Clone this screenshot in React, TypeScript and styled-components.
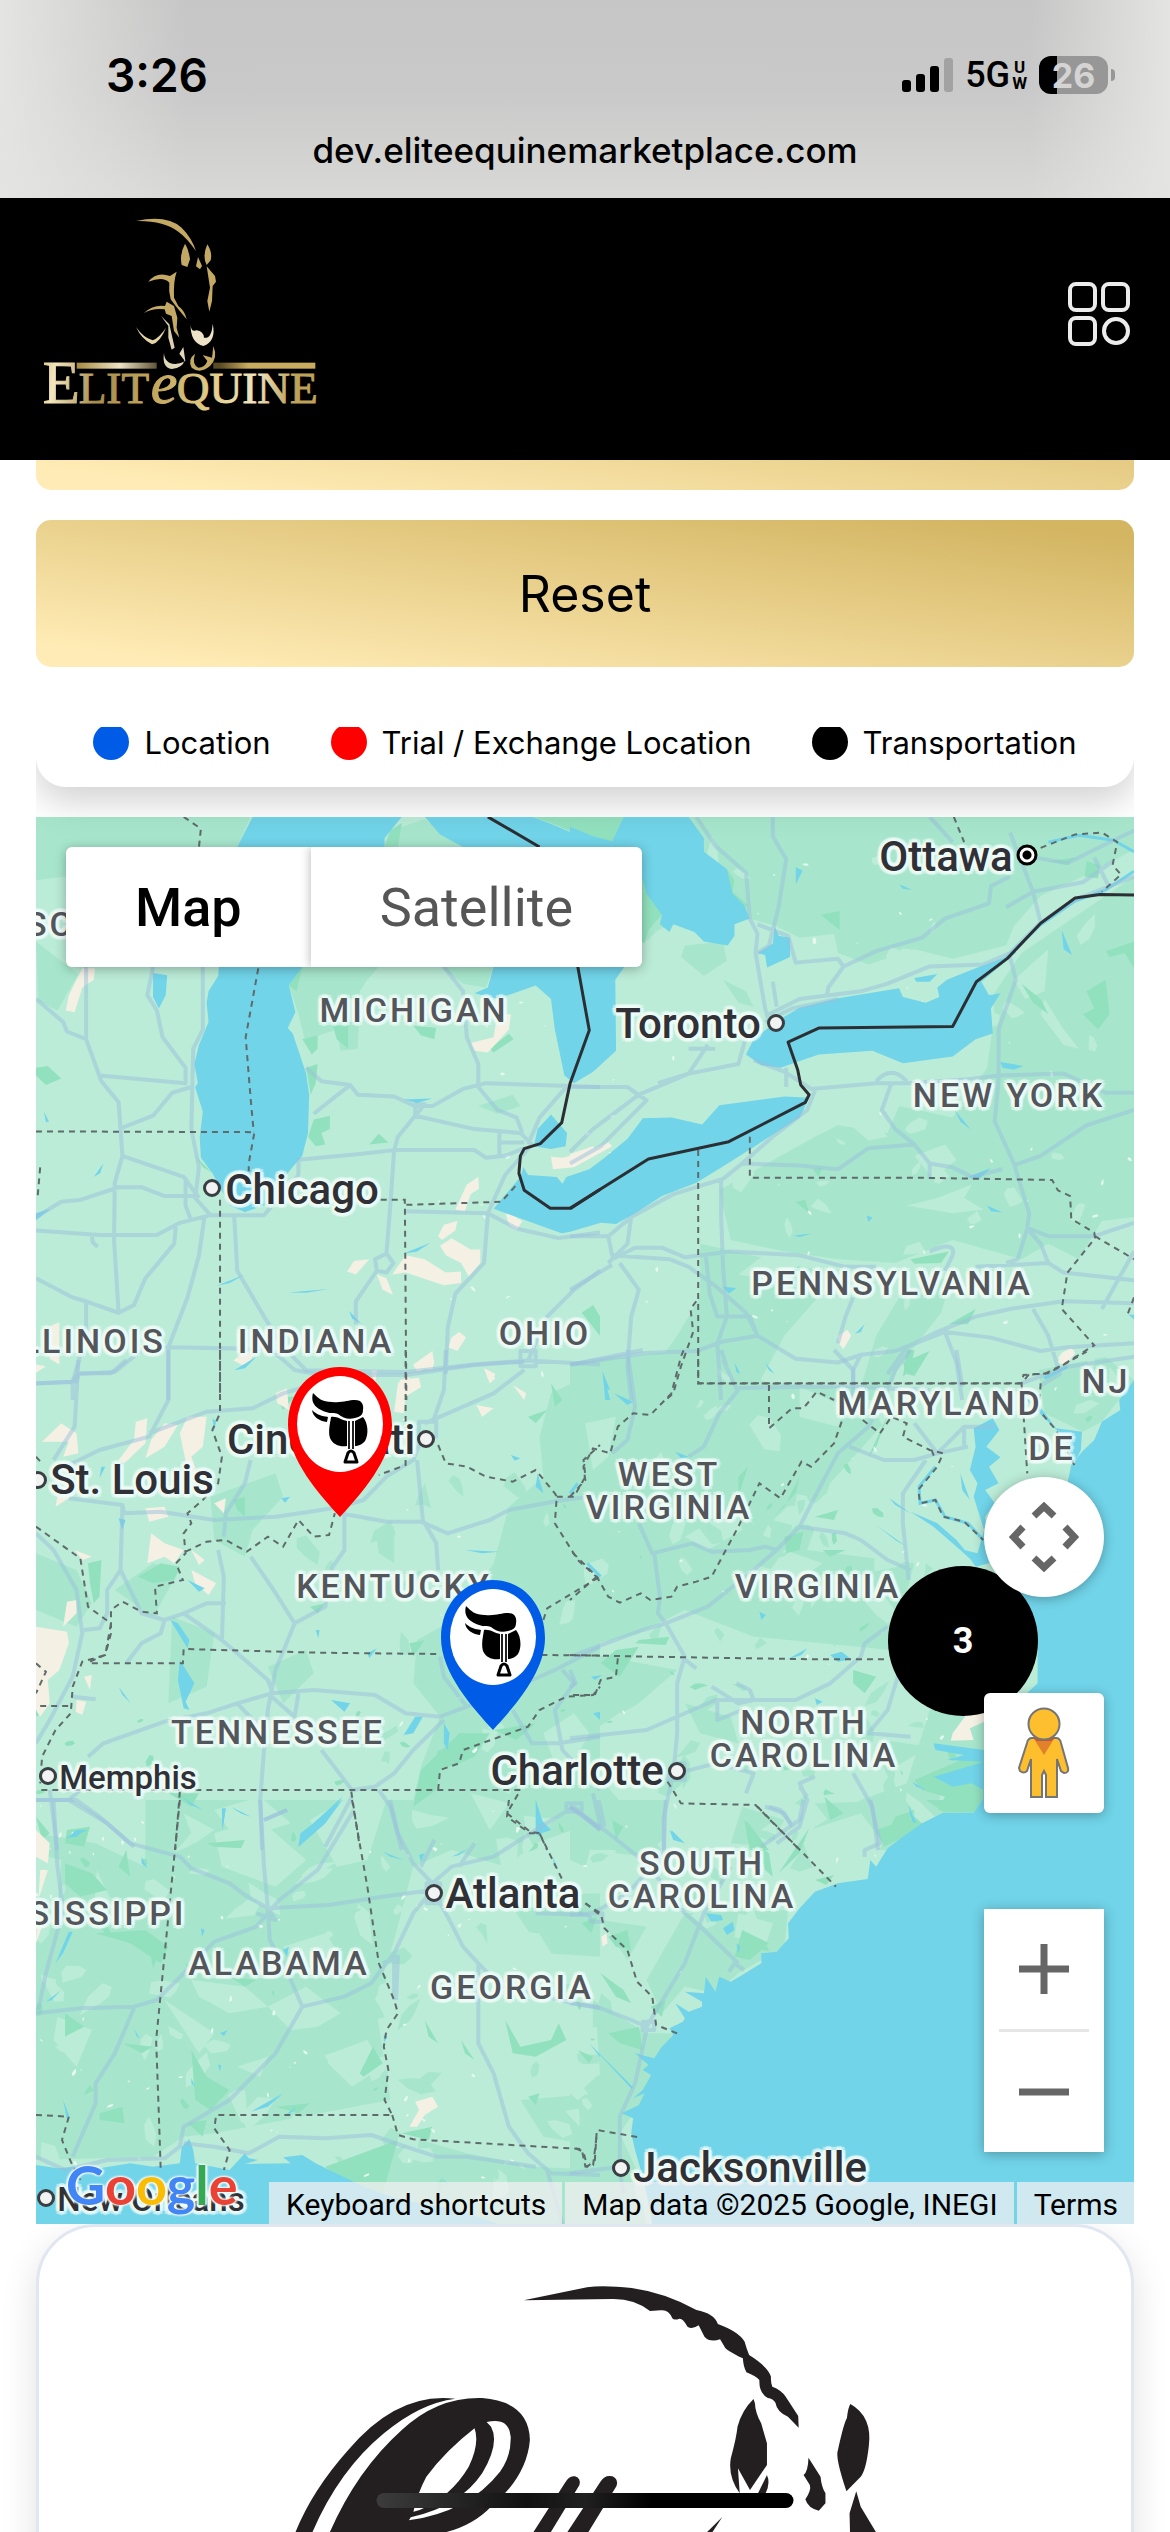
import React from 'react';
import styled, { createGlobalStyle } from 'styled-components';

const GlobalStyle = createGlobalStyle`
  * { box-sizing: border-box; }
  body { margin: 0; background: #fff; }
  button { font: inherit; color: inherit; border: 0; padding: 0; background: none; cursor: pointer; }
  a { color: inherit; text-decoration: none; }
  svg { display: block; }
`;

const Screen = styled.div`
  position: relative;
  display: flex;
  flex-direction: column;
  height: 100vh;
  overflow: hidden;
  color: #000;
  font-family: Inter, 'Liberation Sans', sans-serif;
`;

/* ---------- browser chrome ---------- */

const StatusBar = styled.div`
  flex: none;
  display: flex;
  flex-direction: column;
  height: 198px;
  padding-top: 48px;
  background:
    linear-gradient(90deg, #e4e4e2 0, rgba(228, 228, 226, 0) 16%, rgba(228, 228, 226, 0) 88%, #e4e4e2 100%),
    linear-gradient(180deg, #c6c6c6, #c9c9c9 45%, #d8d8d6);
`;
const StatusRow = styled.div`
  display: flex;
  align-items: center;
  justify-content: space-between;
  height: 54px;
  padding: 0 55px 0 106px;
`;
const Clock = styled.time`
  font-size: 46px;
  font-weight: 600;
`;
const Indicators = styled.div`
  display: flex;
  align-items: center;
  gap: 12px;
`;
const Network = styled.span`
  display: flex;
  align-items: center;
  gap: 2px;
  font-family: Roboto, sans-serif;
  font-size: 36px;
  font-weight: 500;
  line-height: 36px;
`;
const NetworkMode = styled.span`
  display: flex;
  flex-direction: column;
  align-items: center;
  font-size: 17px;
  font-weight: 700;
  line-height: 16px;
`;
const Battery = styled.span`
  display: flex;
  align-items: center;
  justify-content: center;
  width: 69px;
  height: 38px;
  border-radius: 12px;
  background: linear-gradient(90deg, #000 18px, #979797 18px);
  color: #d4d4d4;
  font-size: 34px;
  font-weight: 700;
`;
const BatteryTip = styled.span`
  width: 4px;
  height: 12px;
  margin-left: -9px;
  border-radius: 0 4px 4px 0;
  background: #979797;
`;
const Address = styled.div`
  margin-top: 26px;
  font-size: 35px;
  font-weight: 500;
  line-height: 44px;
  text-align: center;
`;

/* ---------- site header ---------- */

const Header = styled.header`
  position: relative;
  z-index: 2;
  flex: none;
  display: flex;
  align-items: flex-start;
  justify-content: space-between;
  height: 262px;
  padding: 17px 39px 0 42px;
  background: #000;
`;
const MenuButton = styled.button`
  margin-top: 66px;
`;

/* ---------- page ---------- */

const Page = styled.main`
  flex: 1;
  min-height: 0;
  padding: 0 36px;
`;
const Actions = styled.div`
  display: flex;
  flex-direction: column;
  gap: 30px;
  margin-top: -117px;
`;
const GoldButton = styled.button`
  height: 147px;
  border-radius: 15px;
  background: linear-gradient(to top right, #ffebb5 8%, #d3b562 94%);
  font-size: 50px;
`;
const MapSection = styled.section`
  overflow: hidden;
`;
const Legend = styled.div`
  position: relative;
  z-index: 1;
  margin-bottom: 30px;
  padding: 60px 0 26px;
  border-radius: 0 0 30px 30px;
  background: #fff;
  box-shadow: 0 15px 36px rgba(0, 0, 0, 0.18);
`;
const LegendList = styled.ul`
  display: flex;
  justify-content: center;
  gap: 60px;
  height: 34px;
  margin: 0;
  padding: 0;
  overflow: hidden;
  list-style: none;
`;
const LegendItem = styled.li`
  display: flex;
  gap: 15px;
  font-size: 31px;
  line-height: 32px;
  white-space: nowrap;
`;
const LegendDot = styled.span<{ $color: string }>`
  width: 36px;
  height: 36px;
  margin-top: -3px;
  border-radius: 50%;
  background: ${(p) => p.$color};
`;

/* ---------- map ---------- */

const MAP = { x: 36, y: 817, w: 1098, h: 1407 };
const left = (x: number) => `${((x - MAP.x) / MAP.w) * 100}%`;
const top = (y: number) => `${((y - MAP.y) / MAP.h) * 100}%`;

const MapCanvas = styled.div`
  position: relative;
  width: 100%;
  aspect-ratio: 1098 / 1407;
  overflow: hidden;
  background: #bbecd8;
  font-family: Roboto, 'Liberation Sans', sans-serif;
`;
const Terrain = styled.svg`
  width: 100%;
  height: 100%;
`;
const halo = [
  [4, 0], [-4, 0], [0, 4], [0, -4], [3, 3], [-3, 3], [3, -3], [-3, -3], [2, 0], [-2, 0], [0, 2], [0, -2],
].map(([x, y]) => `${x}px ${y}px 1px rgba(240, 252, 248, 0.6)`).join(', ');

const Place = styled.span<{ $x: number; $y: number }>`
  position: absolute;
  left: ${(p) => left(p.$x)};
  top: ${(p) => top(p.$y)};
  transform: translate(-50%, -50%);
  color: #2f3136;
  font-weight: 500;
  line-height: 1;
  text-align: center;
  white-space: pre;
  text-shadow: ${halo};
`;
const Region = styled(Place)`
  color: #53565b;
  font-size: 34px;
  line-height: 33px;
  letter-spacing: 3px;
`;
const City = styled(Place)<{ $small?: boolean }>`
  font-size: ${(p) => (p.$small ? 33 : 42)}px;
`;
const CityDot = styled.span<{ $x: number; $y: number; $capital?: boolean }>`
  position: absolute;
  left: ${(p) => left(p.$x)};
  top: ${(p) => top(p.$y)};
  width: ${(p) => (p.$capital ? 21 : 18)}px;
  height: ${(p) => (p.$capital ? 21 : 18)}px;
  border: 3px solid ${(p) => (p.$capital ? '#000' : '#3a3d42')};
  border-radius: 50%;
  background: ${(p) => (p.$capital ? 'radial-gradient(#000 0 4px, #fff 5px)' : '#f1f3f2')};
  transform: translate(-50%, -50%);
`;
const PinButton = styled.button<{ $x: number; $y: number }>`
  position: absolute;
  left: ${(p) => left(p.$x)};
  top: ${(p) => top(p.$y)};
  transform: translate(-50%, -100%);
`;
const Cluster = styled.button<{ $x: number; $y: number }>`
  position: absolute;
  left: ${(p) => left(p.$x)};
  top: ${(p) => top(p.$y)};
  width: 150px;
  height: 150px;
  border-radius: 50%;
  background: #000;
  color: #fff;
  font-size: 36px;
  font-weight: 700;
  transform: translate(-50%, -50%);
`;
const MapTypes = styled.div`
  position: absolute;
  top: 30px;
  left: 30px;
  display: flex;
  border-radius: 6px;
  background: #fff;
  box-shadow: 0 2px 12px rgba(0, 0, 0, 0.3);
  overflow: hidden;
`;
const MapType = styled.button<{ $active?: boolean }>`
  height: 120px;
  padding: 0 69px;
  color: ${(p) => (p.$active ? '#000' : '#565656')};
  font-size: 54px;
  font-weight: ${(p) => (p.$active ? 500 : 400)};
  & + & { box-shadow: 0 0 10px rgba(0, 0, 0, 0.3); }
`;
const Controls = styled.div`
  position: absolute;
  right: 30px;
  bottom: 72px;
  display: flex;
  flex-direction: column;
  gap: 96px;
  width: 120px;
`;
const Control = styled.button<{ $round?: boolean }>`
  display: grid;
  place-items: center;
  height: 120px;
  border-radius: ${(p) => (p.$round ? '50%' : '6px')};
  background: #fff;
  box-shadow: 0 2px 12px rgba(0, 0, 0, 0.3);
`;
const Zoom = styled.div`
  display: flex;
  flex-direction: column;
  background: #fff;
  box-shadow: 0 2px 12px rgba(0, 0, 0, 0.3);
`;
const ZoomButton = styled.button`
  display: grid;
  place-items: center;
  height: 120px;
`;
const ZoomRule = styled.span`
  height: 3px;
  margin: 0 15px;
  background: #e6e6e6;
`;
const Attribution = styled.div`
  position: absolute;
  right: 0;
  bottom: 0;
  display: flex;
  gap: 3px;
  font-size: 30px;
  white-space: nowrap;
  & > * {
    height: 42px;
    padding: 3px 16px 0 17px;
    background: rgba(245, 240, 242, 0.72);
    line-height: 39px;
  }
`;
const GoogleLogo = styled.a`
  position: absolute;
  left: 30px;
  bottom: 9px;
  font-family: Lato, sans-serif;
  font-size: 54px;
  font-weight: 700;
  line-height: 60px;
  text-shadow: 0 0 3px #fff, 0 0 3px #fff, 2px 0 2px #e8f8fa, -2px 0 2px #e8f8fa;
`;
const Letter = styled.span<{ $color: string }>`
  color: ${(p) => p.$color};
`;

const Card = styled.article`
  height: 900px;
  border: 3px solid #e1e7f1;
  border-radius: 60px;
  background: #fff;
  box-shadow: 0 12px 36px rgba(0, 0, 0, 0.12);
  overflow: hidden;
`;
const CardArt = styled.svg`
  width: 100%;
  height: auto;
`;
const HomeIndicator = styled.div`
  position: absolute;
  bottom: 24px;
  left: 50%;
  width: 417px;
  height: 15px;
  border-radius: 8px;
  background: linear-gradient(90deg, #3c3c3c, #111 36%, #202020 50%, #000 66%);
  transform: translateX(-50%);
  z-index: 3;
`;

/* ---------- map geometry: six sheets, each on its own grid ---------- */

type Sheet = {
  transform: string;
  forest: string;
  meadow?: string;
  dense?: string;
  sand?: string;
  water: string;
  rivers?: string;
  roads: string;
  states: string;
  nation?: string;
};

const sheets: Sheet[] = [
  {
    transform: 'translate(0 800) scale(.38265)',
    forest:
      'M94 44H655L620 123 560 160 300 240 172 200 94 210Z M94 370L172 430 205 455 150 550 100 525Z M790 436H990L960 470 940 500 935 650 890 655 880 600 820 620 800 640 780 560 755 485Z M1150 436H1290L1270 490 1210 480Z M1568 1480L1520 1500 1490 1568H1568Z M1000 123L1020 80 1110 50 1210 123Z M1250 800L1340 770 1360 800 1300 820Z',
    dense:
      'M94 700L125 695 160 728 120 745 94 720Z M755 485L790 436 775 500Z M790 625L830 615 830 650 815 665Z M820 835L862 825 862 860 840 870 850 900 825 905 805 880Z M965 900L990 872 1015 895Z M800 700L830 690 825 740 812 770Z M510 930L555 975 530 960Z M1390 44H1600V112L1510 90 1440 60Z M1005 123L1020 80 1050 60 1040 123Z M1080 590L1140 595 1135 625 1100 615Z M870 590L910 590 910 650 880 625Z M1520 1340L1550 1320 1568 1350V1400Z M1280 650L1330 610 1342 625 1290 660Z',
    sand:
      'M215 440L248 440 245 470 215 490 195 555 172 550 180 510 195 480Z M1300 560L1335 560 1330 600 1275 660 1240 655 1230 635 1290 620Z M1220 1005L1250 985 1252 1015 1230 1030 1215 1075 1190 1070Z M1145 1140L1160 1110 1195 1100 1190 1125 1155 1150Z M1150 1165L1180 1145 1230 1175 1255 1175 1255 1210 1225 1245 1205 1210 1165 1190Z M1025 1240L1060 1190 1110 1200 1165 1235 1205 1232 1205 1262 1160 1268 1060 1235Z M907 1232L925 1205 965 1200 930 1240Z M985 1240L1010 1250 1027 1293 1000 1280Z M1320 1075L1365 1100 1350 1125 1330 1110Z M1180 1405L1200 1390 1218 1405 1195 1440 1172 1430Z M1080 1475L1130 1440 1135 1475 1090 1495Z M1045 1515L1095 1510 1100 1535 1040 1568Z M610 1465L640 1440 665 1450 640 1480Z M130 1375L155 1365 155 1475 130 1460Z M94 1475L120 1480 94 1497Z M1265 1485L1295 1500 1280 1525Z M1440 932L1470 935 1530 920 1590 895 1600 905 1500 960 1445 965Z',
    water:
      'M660 44H1050L1005 100V123L790 436 755 485 772 555 752 596 765 610 800 715 808 770 805 870 790 930 760 965 740 990 690 1060 640 1077 600 1060 555 975 525 935 522 880 530 815 510 750 517 740 508 690 520 640 545 580 540 530 545 500 570 460 572 436 620 123Z M1110 44H1390L1440 62 1510 92 1700 130 1650 200H1400L1210 123 1150 90Z M1290 436H1632L1608 470 1610 655 1550 710 1500 740 1475 720 1450 600 1440 520 1400 485 1300 520 1240 505 1275 490Z M1440 822L1482 870 1478 905 1440 912 1395 905 1405 860Z M1290 1068L1360 985 1368 960 1380 980 1455 985 1470 1003 1480 985 1540 965 1580 935 1640 885 1680 832 1755 830 1835 848 1880 798 2050 775 2115 778 2090 830 1980 900 1910 945 1820 1000 1730 1035 1660 1080 1610 1108 1570 1105 1490 1128 1468 1132 1420 1115 1350 1090Z M400 452L437 458 433 510 415 545 400 515Z M245 985L270 950 262 975Z M115 815L128 840 120 842Z M565 1270L640 1240 600 1262Z M755 1287L860 1278 800 1288Z M1055 1185L1125 1157 1090 1180Z M912 1335L945 1370 920 1355Z M612 1490L670 1455 640 1485Z M1055 783L1130 780 1090 792Z M94 1080L132 1068 94 1098Z',
    roads:
      'M94 520L165 580 175 605 225 625 265 735 310 790 320 930 300 1000 298 1150 310 1340 M225 436V625 M400 436L385 510 410 550 425 620 485 700V740L260 720 M530 436V600L505 650 500 860 520 960 510 1040 550 1085H690L780 980V940L940 925 1030 915H1240L1270 935 1320 930 1370 910 M310 860L400 825 450 765 500 750 M320 930L480 985 520 1040 M94 1090L160 1050 210 1045 310 1012H370L430 1035H510 M94 1125L260 1137H410L470 1105 550 1085 M240 1137L242 1155 255 1168 M460 1110L455 1160 380 1250 350 1320 310 1340 230 1312 190 1300 94 1250 M225 1312V1400L190 1520V1568 M485 985V1060L500 1100 M535 1085L520 1190 490 1300 440 1430V1568 M612 1085L620 1230 690 1350 740 1430 800 1490 1060 1495 1240 1475 1380 1465 1568 1475 M1030 915L1020 1060 1010 1185 M1010 1185L1028 1210 1010 1235 985 1230 980 1200 1010 1185 M985 1230L930 1310V1370 M1030 915L1040 880 1085 825V795H1110L1085 825 1240 860 1360 870 1390 900 1320 980 1275 1080 1060 1075 M1305 870V935 M1305 895H1370 M800 700L840 735 915 745 935 770 1030 775 1085 800 1130 800 1210 755 1270 740 1568 750 M820 820L870 780 915 745 M1160 436L1210 500 1220 620 1250 690V750L1300 810 1350 830 1365 870 M1380 900L1410 830 1480 750 M1275 1080L1350 1120 1460 1145 1568 1130 M1275 1080L1265 1210 1190 1290 1170 1380 1165 1500 M1568 1230L1500 1280 1430 1350 1380 1465 M440 1430L700 1435 M94 1525L200 1520 205 1500 300 1495 380 1430 440 1430 M1360 1440H1400V1480H1360Z',
    states:
      'M94 866L665 868 650 950V970 M675 440L642 620 655 780 663 868 M575 1045V1568 M995 1045H1058L1062 1568 M1062 1058L1310 1050 1355 1000 M480 44L525 75 520 123 M105 960L98 1040',
    nation:
      'M1275 44L1410 123 M1510 436L1540 602 1490 740 1468 843 1412 898 1370 911 1360 930 1356 975 1370 1020 1438 1067H1492L1568 1018',
  },
  {
    transform: 'translate(570 800) scale(.38265)',
    forest:
      'M310 44H1474V130L1340 200 1230 250 1160 330 1140 380 1000 415 900 390 780 430 700 400 690 350 600 360 540 330 470 310 425 245 350 135Z M188 200L240 260 270 325 230 340 200 370Z M1180 400L1474 200V1090L1390 1100 1330 1200 1250 1160 1180 1200 1000 1150 850 1210 700 1200 560 1180 420 1150 390 1020 640 880 700 850 830 870 860 800 1000 830 1090 700 1110 560 1105 510Z M340 1160L700 1240 560 1400 470 1568H160L280 1400 340 1300Z M750 1568L800 1400 860 1300 1000 1240 970 1340 860 1480 820 1568Z M300 380L400 370 410 420 350 460 290 410Z M400 470L460 500 480 540 440 530Z',
    meadow:
      'M880 1060L960 1040 1050 1005 1030 1040 1080 1070 1000 1080Z M1240 520L1290 600 1330 650 1290 640 1230 560Z M700 760L800 740 790 830 830 880 780 890 700 820Z M520 1180L620 1190 560 1260 440 1240Z M1160 470L1250 390 1240 500 1190 520Z M900 930L980 900 1010 940 950 990Z M200 1250L320 1200 330 1290 240 1300Z',
    dense:
      'M0 44H140L110 108 60 95 0 70Z M188 200L245 280 240 300 205 340 195 375 188 370Z M410 180L430 210 425 240 465 275 440 300 415 260Z M655 300L705 290 705 340 680 320Z M890 1200L990 1180 970 1210 900 1212Z M870 1470L940 1440 900 1505 880 1500Z M1350 500L1400 470 1410 560 1380 600 1340 560 1370 545Z M1400 395L1474 370V440L1450 400 1410 410Z M1180 480L1230 520 1250 560 1210 530Z M590 1050L615 1045 625 1080Z M990 1370L1060 1330 1040 1370Z M635 965L660 960 650 985Z M1250 160L1320 150 1300 170Z M1350 160L1385 170 1380 205 1345 200Z',
    sand: 'M0 925L60 905 68 915 0 958Z M700 1400L725 1385 735 1400 715 1435 702 1420Z M1285 1445L1310 1432 1320 1445 1295 1478 1275 1470Z',
    water:
      'M140 44H310L350 100V135L410 180 425 245 455 275 470 310 430 325V355L412 380 350 370 325 345 270 325 260 345 235 325 240 300 200 245 188 200H0V70L60 95 110 108Z M535 330L545 355 575 360V410L515 438 510 405 490 400 530 375Z M460 665L480 625 545 575 600 543 700 518 860 492 870 515 930 530 965 515 960 490 985 470 1060 440 1140 410 1170 375 1165 400 1075 475 1095 510 1125 505 1100 545 1105 610 1060 625 1000 670 870 688 790 655 650 665 550 700 500 693Z M900 465L960 455 940 475 905 475Z M590 175L608 185 590 220Z M860 220L895 235 870 232Z M1285 340L1312 405 1290 390Z M1125 685L1185 695 1160 705 1130 700Z M1005 810L1048 862 1020 840Z M1040 985L1100 962 1070 990Z M1090 1060L1130 1078 1100 1075Z M775 1085L790 1092 780 1103Z M585 1138L632 1133 600 1142Z M400 1272L435 1275 415 1290Z M745 1395L770 1370 760 1390Z M85 1490L105 1568H92Z M430 1470L445 1500 435 1495Z M510 1470L535 1500 520 1490Z M1460 1345H1474V1358Z',
    rivers: 'M1140 412L1230 326 1320 264 1400 235 1474 186 M1250 110L1330 92 1420 105 1474 135',
    roads:
      'M330 44L380 120 460 190 470 310 490 350 485 400 510 545 520 580 M530 44V95L565 155 545 280 520 380 490 400 M490 325L570 355 590 425 700 415 715 435 800 395 920 360 980 310 1095 270 1100 225 1150 200 M715 435L675 490 670 515 M520 560L600 520 760 500 830 480 940 435 1080 430 1150 400 1230 320 1320 260 1474 200 M510 580L580 545 700 520 M530 475L540 540 M1150 85L1210 240 1230 320 M1140 280L1210 240 1340 215 1420 160 M1210 150L1300 165 1370 130 1474 80 M1370 150L1410 230 M940 44L1000 110 M460 620L440 690 310 715 230 740 M360 640L310 715 180 770 60 860 0 920 M310 650L380 650 M0 750H150L200 785 80 905 0 950 M480 680L560 710 630 755 800 740 880 740 1040 730 1120 720 1290 715 1400 765H1474 M565 700V750 M1150 410L1165 470 1120 600V730L1110 840 1160 950 1200 1080 1195 1120 M800 735Q840 690 880 735 M840 740L815 810 850 860 900 900 940 950 1000 960 1050 985 1130 965 M940 950V990 M1474 810L1350 850 1230 930 1160 955 M640 760L620 810 530 880 450 950 400 990 270 1030 160 1090 100 1140 0 1140 M450 950L600 955 700 965 780 910 900 900 M395 990V1090L400 1220 410 1350 385 1420 395 1568 M355 1190L365 1290 385 1350 470 1350 490 1400 M100 1140L110 1190 260 1200 310 1220 380 1270 460 1340 490 1400 590 1460 700 1470 760 1450 850 1440 980 1390 1100 1405 1230 1440 1300 1430 1474 1420 M110 1200L170 1170H240L300 1195 420 1180 600 1190 720 1220H800 M160 1090L150 1160 100 1210 M130 1210L180 1280 160 1350 150 1480 160 1568 M110 1215L0 1280 M0 1475L200 1445 330 1440 400 1415 490 1400 M700 1420L720 1350 740 1300 M940 1180Q1010 1150 1000 1190L980 1230 M1060 1220L1250 1210 M1195 1120L1170 1200 1140 1210 M1200 1120L1250 1140H1370L1474 1105 M1195 1120L1230 1160 1250 1210 1290 1235 1474 1255 M1474 1180L1440 1240 1390 1330 M830 1500L880 1430 960 1390 1060 1350 1150 1330 1290 1310 1474 1315 M980 1390L1010 1470 1025 1568 M1210 1330L1250 1400 1280 1500 1230 1530 M740 1568V1490L760 1450',
    states:
      'M1003 44L1030 110 M1230 125L1320 90 1390 85 1430 110 1418 170 1440 195 1390 240 M470 880V987H900L1260 993 1275 1020 1307 1035 1310 1095 1370 1130 1372 1145 1300 1235 1285 1330 1370 1425 1290 1475 1240 1500H1200L1180 1525 M1372 1140L1474 1200 M335 915V1525H1180 M330 1310L315 1330 322 1390 290 1480 270 1550 250 1568 M1474 1300L1455 1350',
    nation: 'M0 1067L205 938 415 893 615 790 625 770 603 745 595 705 570 633 650 596 1000 592 1062 475 1143 414 1230 322 1320 256 1385 247 1474 248',
  },
  {
    transform: 'translate(0 1350) scale(.38265 .33333)',
    forest:
      'M94 610L200 660 240 760 200 830 94 780Z M1568 60L1440 130 1410 260 1420 380 1330 470 1290 640 1200 800 1090 870 1080 1000 1150 1100 1100 1250 1080 1350H1568Z M550 440L720 370 740 440 660 540 640 620 560 570Z M850 170L1010 180 960 320 860 330Z M450 800L560 850 540 1010 440 1060Z M980 540L1030 530 1030 640 990 610Z M440 1350H1100L1050 1500H440Z M700 950L800 900 820 970 740 1060Z M300 720L400 640 470 660 400 800Z',
    meadow: 'M1200 900L1300 820 1400 900 1300 1020 1210 1010Z M1420 1150L1500 1090 1540 1150 1470 1300Z M560 1380L680 1340 760 1420 620 1470Z M1230 1330L1330 1360 1280 1440Z',
    dense:
      'M230 640L265 630 260 740 245 760 235 700Z M360 680L420 640 470 650 455 690 400 700Z M1100 1260L1200 1150 1280 1150 1240 1220 1200 1240 1150 1260 1140 1320 1080 1370Z M1290 1140L1400 1120 1350 1170Z M610 450L640 440 640 500 620 480Z M1440 100L1470 150 1450 170Z M1380 200L1430 180 1400 220Z M175 1440L235 1430 220 1490 170 1480Z M94 1400L130 1450 110 1470Z M1070 880L1110 870 1080 920Z M440 1330L520 1330 500 1370Z M810 770L850 760 830 790Z M720 140L770 140 740 180Z',
    sand:
      'M355 215L385 205 380 280 325 340 310 330 350 270Z M430 220L465 225 430 290 380 325 395 270Z M490 200L540 200 530 290 500 320 520 385 490 360 470 250Z M160 220L200 250 205 310 165 320 180 275 110 275Z M720 130L750 115 755 180 725 160Z M1080 50L1110 20 1135 30 1130 60Z M1040 100L1065 80 1100 110 1060 140 1055 190 1030 185Z M1245 165L1290 175 1260 200Z M1340 105L1375 130 1370 150Z M395 550L430 580 480 600 455 640 430 620 385 640Z M500 660L565 700 545 735 510 700Z M500 600L535 630 520 645Z M94 830L175 845 180 880 155 960 125 990 130 1060 105 1100 94 1080Z M175 755L200 750 200 790 165 830Z M195 600L240 620 215 630Z M200 1050L225 1055 215 1095 198 1085Z M220 980L240 975 235 1020Z M560 460L590 445 585 490Z M380 475L430 470 440 500 390 515Z M94 1450L130 1500H94Z M1265 55L1295 85 1280 100Z M970 60L985 60 980 110Z M150 440L200 430 145 470Z',
    water:
      'M310 505L328 510 320 540Z M445 810L465 820 495 870 490 895Z M470 930L508 1000 485 1055 495 1080 480 1075 465 990Z M1055 1155L1085 1100 1105 1100 1080 1150Z M1160 1120L1175 1150 1170 1200 1160 1180Z M865 1050L915 1060 900 1085Z M1405 370L1420 430 1400 410Z M735 445L758 440 745 458Z M310 1010L342 1060 320 1035Z M1215 600L1305 605 1260 610Z M960 910L985 895 965 925Z M555 205L565 215 560 240Z M265 350L275 350 260 385Z M1335 315L1360 325 1345 332Z M580 1375L590 1375 580 1440Z M605 1372L655 1400 630 1390Z M895 1340L850 1420 780 1490 790 1450Z M1400 1350L1425 1440 1405 1460Z M1550 1090L1568 1085V1110Z M490 690L535 715 520 725Z M825 840L835 840 832 865Z M170 1465L220 1440 200 1460Z M475 1340L530 1380 500 1365Z',
    roads:
      'M94 100L190 95 205 70 290 70 330 30 M205 30L195 230 140 330 M440 0V150L390 260 260 300 180 345 M390 250L540 185 660 175 740 130 830 100 M710 0L770 60 840 75H1060L1240 45 1370 35 M94 550L140 600 200 720 215 850 190 980 130 1110 94 1180 M180 445L320 465 325 490 420 485 560 510 720 500 810 485 890 470 950 450 1010 380 1080 330 1110 240 M320 465L315 660 280 720V790L260 835 220 840 M315 660L370 790 430 810 480 790 580 870 700 990 710 1020 M430 810L420 850 370 880 330 940 M480 790L540 760 590 760 M655 330L640 400 590 490 585 560 M570 600L585 680 580 870 M655 620L715 720 770 820 720 960 700 1080 690 1200 680 1350 685 1500 M900 480V600L870 650 850 770 770 820 M890 490L1010 515H1100L1170 550 1280 510 1330 480 1470 450 1540 440 M1090 330L1105 510 1140 580 1145 660 M230 1220L270 1180 430 1115 540 1090 620 1060 710 1030 820 1020 980 1035 1060 1090 1150 1100 1220 1070 1290 1040 1450 960 1568 890 M620 1060L670 1120 M710 1040L770 1100 780 1030 M1150 920L1160 980 1220 1070 M1160 1110L1080 1200 1030 1270 980 1310 920 1320 840 1200 M94 1350H180L280 1420 350 1490 M180 1350L230 1300 M130 1320L150 1500 M1110 220L1170 190 1290 130 1370 60 M1165 0L1160 120 1130 220 M990 1320L1020 1370 1050 1500 M920 1340L850 1490 M1340 1080L1390 1180 1460 1180 1568 1160 M1470 960L1500 1000 1450 1080 1470 1200 1568 1320 M690 1410L750 1380 M1095 215H1140V260H1095Z M190 1040L250 1048',
    states:
      'M575 0V190L555 240 580 320 570 400 530 450 490 490 500 520 480 550 485 610 460 640 478 690 405 710 410 790 370 785 320 755 290 780 290 850 275 915 235 935 M485 605L540 575 590 570 645 605 700 560 740 590 780 510 820 560 860 555 875 490 M1060 0V345L990 375 M1145 285L1165 340 1220 350 1270 380 1340 395 1400 360 1450 430 1455 440 1450 520 1510 630 1568 690 M1455 440H1500L1530 380 1525 330 1568 285 M240 940H478L480 897 830 908 1140 912 M1415 915L1568 917 M94 530L210 625 230 770 290 820 275 915 215 935 190 1010 185 1090 145 1140 110 1220 105 1300 M108 1320H1360L1325 1390 1385 1445 1410 1450 1430 1500 M1145 1320L1150 1260 1200 1240 1210 1200 1380 1130 1410 1080 1480 1040 1550 1035 1568 1010 M470 1325L458 1500 M918 1325L940 1490 M1420 810L1430 775 1568 680 M105 1068H180 M94 320L110 340 M94 940L120 965 94 1030',
  },
  {
    transform: 'translate(570 1350) scale(.38265 .33333)',
    forest:
      'M0 40L300 0 520 100 740 110 820 220 680 400 620 600 900 640 840 900 480 860 300 780 180 850 0 900Z M0 900L280 960 180 1060 0 1180Z M1225 60L1400 20 1474 90 1390 215 1340 245 1240 190Z M940 1080L1082 1000V1385L975 1390 830 1500H600L640 1430 760 1350 880 1300Z M0 1330L90 1300 240 1500H0Z M300 1060L420 1100 440 1180 340 1150Z M930 640L1000 700 960 900 900 930Z M820 1170L940 1190 850 1250Z',
    meadow: 'M600 500L720 380 840 250 880 300 840 430 740 540 660 560Z M40 220L120 200 100 320 60 360Z M560 600L660 640 560 720 500 700Z M300 560L420 480 480 520 360 600Z M250 850L350 880 280 940Z M1090 220L1180 200 1280 380 1200 500 1100 440 1120 330Z M960 380L1040 400 1080 640 960 480Z M600 110L720 170 700 230 600 200Z',
    dense:
      'M600 380L560 470 530 500 590 430Z M440 380L465 350 440 440Z M830 200L800 290 780 320 820 220Z M880 0L900 0 890 60 870 80Z M560 560L610 545 600 600 565 610Z M180 870L260 860 250 885 170 880Z M80 940L120 900 180 890 130 980Z M900 1290L1082 1200V1340L1050 1385 960 1380 980 1340 920 1320Z M665 1340L715 1390 680 1410Z M740 960L800 980 770 1030 740 1000Z M455 1410L500 1470 520 1500H470Z M660 600L720 600 680 620Z M640 500L700 480 690 510Z M800 1440L900 1400 930 1430 820 1490Z',
    sand: 'M1000 1150L1045 1080H1085L1082 1115 1045 1135 1055 1170 995 1172Z M1285 10L1300 0 1318 0 1300 30 1275 25Z',
    water:
      'M1474 90L1435 150 1438 180 1390 215 1370 270 1338 305 1310 345 1300 400 1240 560 1180 640 1150 720 1222 850V1000L1082 1150V1200L950 1180 955 1200 1030 1215 985 1230 1082 1235 950 1280 1000 1310 1050 1300 1080 1320 1080 1345 1055 1388H975L920 1420 870 1460 830 1495 800 1550 785 1530 778 1587 700 1600 640 1625 600 1675 570 1720 572 1765 540 1805 500 1810 500 1840 450 1875 420 1895 390 1880 380 1925 355 1880 350 1930 300 1925 345 1955 345 1970 310 1985 275 1960 300 2005 295 2015 260 2035 270 2055 240 2090 220 2125 170 2110 205 2145 190 2160 212 2175 190 2220 165 2245 195 2230 180 2265 135 2290 165 2305 160 2350 170 2400 185 2460 200 2530 215 2622H1474Z M1055 235L1105 205 1122 240 1088 290 1125 322 1095 350 1120 400 1085 420 1110 460 1085 500 1095 640 1060 650 1030 600 1065 610 1082 540 1055 440 1065 400 1045 360 1060 290Z M1185 140L1225 165 1270 235 1338 245 1335 300 1315 345 1290 260 1240 205Z M1020 370L1045 450 1025 420Z M890 485L960 520 1010 570 1068 650 1020 600 950 530Z M680 915L710 905 735 928 700 935Z M565 930L620 895 605 915Z M85 65L105 120 90 115Z M115 130L165 155 150 165Z M495 785L512 795 500 810Z M800 525L880 590 850 570Z M885 1365L905 1420 890 1400Z M835 445L890 490 850 465Z M640 1045L660 1055 645 1065Z M895 1295L930 1320 905 1310Z M275 305L310 320 290 325Z M55 980L85 975 65 990Z M260 1440L300 1480 270 1470Z',
    rivers: 'M955 350L912 410 915 460 955 450 980 500 1040 520 1080 570 M1240 85L1300 50 M45 640L80 680 M0 430L20 400',
    roads:
      'M0 45L190 0 M150 0L170 170 150 270 110 310 M440 120L390 190 350 290 310 320 M400 30L435 115 600 110 740 110 940 120 M395 0L410 50 M180 520L215 610 320 580 370 605 470 600 510 590 540 600 480 660 360 770 250 820 190 840 0 920 M220 610L235 740 230 790 250 820 300 920 280 1000V1150L270 1270 245 1400V1500 M540 600L600 530 640 440 700 310 780 230 830 120 850 60 890 0 M690 0L740 60V110 M1010 0L1025 110 M600 530L720 550 760 570 830 630 890 660 M730 290L820 330 900 330 960 310 1040 290 M900 220L960 310 1030 230H1110 M1030 230V290 M870 530V430L930 330 M870 520L885 690 M0 1165L200 1140 380 1050 590 1050 680 1000 760 920 770 880 830 830 M870 930L830 1080 780 1150 890 1160 M370 1010L440 1060 480 1050 470 1020 435 1000 M385 1050V1110L450 1080 M740 1270L790 1370 805 1500 M280 1270L380 1240 480 1270 460 1330 M640 1280L600 1300 620 1350 600 1430 540 1480 M620 1340L600 1310 M510 1370L560 1390 580 1430 M60 1330L80 1430 M0 1370L80 1440 M1180 100L1300 50 1474 20 M0 960L15 1000 0 1010 M270 1240H300V1290H255Z M290 920L330 955',
    states:
      'M0 440L40 390 35 350 60 295 105 310 125 230 165 190 210 195 265 130 290 20 297 0 M335 0V100H1180L1185 75 1250 70 1350 5 M520 105V235L580 175H610L645 125 690 150 M710 215L690 280 630 350 605 335 550 445 495 400 440 530 370 680 330 695 280 710 265 740 210 750 185 730 130 758 100 740 70 680 0 600 M70 680L0 750 M0 915L200 920 640 928H830 M765 210L810 250 840 200 880 220 870 260 940 300 975 310 960 350 910 420 915 460 955 450 975 500 1030 515 1080 570 M1180 100L1195 370 M1230 100L1225 180 1270 240 1318 345 M945 300L955 330 M125 925L120 980 80 990 65 1035H0 M255 1295L290 1360 485 1365 600 1500',
  },
  {
    transform: 'translate(0 1800) scale(.38265 .33333)',
    forest:
      'M380 0H1568V60L1400 130 1320 200 1180 150 1080 200 1030 420 980 600 1020 900 560 1000 480 1010 400 1070 94 1080V100L250 130 380 200Z M1320 290L1568 280V470L1420 460Z M1360 900L1568 880V1040L1420 1010Z M850 1120L1100 1020 1220 1060 1400 1100 1568 1110V1272H1300L1100 1220Z',
    meadow:
      'M560 100L680 60 800 180 720 260 580 200Z M700 620L800 560 890 640 830 680 760 690Z M840 770L960 720 1000 800 920 860Z M500 540L640 560 700 620 600 640 520 590Z M430 600L560 700 520 760Z M640 1000L780 960 980 960 1040 1010 900 1060Z M740 440L850 400 880 450 800 500Z M150 650L240 690 200 800 140 720Z M620 800L700 770 680 830Z M480 40L560 90 510 130Z M94 160L160 180 150 320 94 280Z M810 60L900 0H1010L960 180 880 200Z',
    dense:
      'M170 190L240 220 280 270 210 290 170 250Z M310 200L330 150 340 230Z M250 400L380 390 440 440 420 490 340 430Z M500 750L540 830 600 870 550 930 510 900Z M170 640L220 680 170 710Z M260 940L320 920 325 970 260 960Z M600 530L670 540 640 560Z M1320 660L1360 740 1440 720 1460 670 1480 720 1400 770 1340 760Z M940 820L975 740 1000 790 950 830Z M1380 890L1410 880 1400 915Z M1110 660L1145 730 1120 710Z M1205 720L1240 780 1215 760Z M850 1100L1040 1020 1000 1180 900 1150Z M1050 1000L1130 980 1120 1020Z M720 920L810 910 780 940Z M540 130L640 120 630 145 560 140Z M320 730L400 740 370 760Z M1520 370L1560 350 1545 400Z M490 970L540 960 530 1010Z',
    sand: 'M1085 905L1130 890 1145 920 1110 945 1090 980 1070 980 1095 930Z M94 90L130 130 125 190 94 170Z M105 210H125L100 300 110 380 94 430Z',
    water:
      'M94 1095L150 1105 200 1100 260 1105 340 1090 400 1100 470 1090 475 1040 495 1018 505 1050 510 1090 600 1110 640 1060 650 1075 675 1080 640 1092 760 1090 740 1072 790 1065 825 1090 870 1115 960 1165 1050 1200 1200 1230 1300 1272H94Z M145 490L180 395 190 395 165 460Z M120 605L160 570 135 600Z M200 90L230 90 175 115Z M370 170L385 205 370 190Z M855 40L895 0 850 70 780 140 785 100Z M580 30L590 25 582 90Z M605 22L655 50 630 40Z M1400 0L1415 60 1440 90 1400 105Z M1180 170L1225 145 1200 165Z M1000 155L1055 180 1020 170Z M1095 165L1110 160 1100 185Z M655 935L740 880 700 920Z M570 795H578L575 815Z M500 835L510 860 500 850Z M745 945L775 920 760 940Z M350 685L365 715 358 710Z M575 700L595 690 585 708Z M165 900L182 950 175 960Z M1540 730L1568 765V772Z M740 450L755 440 750 470Z M525 385L535 390 528 410Z M1445 170L1455 200 1448 200Z M1150 1130L1180 1160 1165 1150Z M1003 705L1012 710 1003 730Z',
    roads:
      'M94 0H200L260 50 340 130 470 170 500 205 600 250 640 285 700 325 860 315 1000 290 1130 270 M140 0L150 200 165 330 120 520 100 630 M680 0L690 200 700 325 705 420 760 540 790 620 720 760 600 900 480 980 470 1040 430 1075 280 1080 170 1110 94 1070 M690 60L750 30 M925 30L830 210 730 300 670 380 560 425 480 520 410 600 350 620 210 625 94 640 M670 340L720 360 700 325 M350 625L300 760 250 850V910L190 1070 M1130 270L1080 340 1030 460 970 550 900 590 790 620 M1130 270L1170 350 1210 440 1250 490V730L1290 820 1330 980 1380 1060 1440 1120 1568 1125 M1020 0L1040 100 1080 190 1130 250 1180 200 1290 170 1400 90 1500 20 M1100 200L1135 120 M1200 200L1240 130 M480 1030L560 1040 650 1060 730 1010 850 1015 970 1005 1060 1040 1140 1070H1220L1400 1100 M1030 460V600 M1000 490L1040 470 1035 600 M1250 490L1310 560 1500 610 1568 625 M1400 340L1540 345 M1430 1110L1470 1272 M1500 20L1568 90 M1115 250H1150V310H1115Z M1480 10H1520V35H1480Z',
    states:
      'M470 0L440 350 408 720 415 940 420 1110 M920 0L960 260 990 490 1030 600 1040 640 1010 690 1003 740 1015 810 1005 900 1025 945H565L560 985 600 1050 585 1110 M1025 945L1040 1005 1080 1018 1520 1047 1530 1100 1550 1095 1560 1000 M94 945L180 950 162 1020 185 1085 210 1140 M1330 0L1325 50 1385 100 1410 100 1470 240 M1530 310L1568 345',
  },
  {
    transform: 'translate(570 1800) scale(.38265 .33333)',
    forest:
      'M90 0L250 0 240 120 200 170 120 160Z M450 20L560 60 520 140 420 130Z M300 340L570 330 560 440 440 520 380 580 300 560 240 640 200 540Z M60 600L200 700 280 700 190 900 130 1000 170 1100 200 1272H0V850L60 900Z M560 230L640 90 640 200Z M640 10L920 0 1050 0 900 70 700 100Z M0 60L60 120 40 200 0 180Z M80 360L200 380 150 480Z',
    meadow: 'M60 560L160 520 200 600 140 620Z M440 340L530 370 510 440 430 410Z M0 700L70 680 80 850 20 900 0 880Z M600 100L760 40 820 130 760 210 640 220Z M330 20L440 40 400 120 320 90Z',
    dense:
      'M100 410L150 390 160 450 120 440Z M100 700L180 680 190 750 130 730Z M450 390L520 430 470 480 430 470Z M490 130L520 160 530 230 510 210Z M460 60L500 120 480 130Z M80 520L140 570 160 610 120 590Z M545 220L625 85 600 160Z M20 750L60 770 50 790Z M110 60L140 80 120 120Z M930 0H1075L1055 38 975 35Z M640 240L690 225 670 255Z M850 50L900 30 870 90 830 100Z M210 620L250 600 240 650Z',
    sand: 'M82 410L95 400 98 430 85 440Z',
    water: 'M355 340L395 345 400 360 370 365Z M400 385L425 365 430 390 410 405Z M435 430L445 440 440 460Z M50 730L165 862 162 868Z M265 90L300 130 268 112Z M890 35L905 70 895 65Z',
    roads:
      'M0 20L90 90 200 190 300 340 350 390 440 490 M415 515L430 490 455 510 M250 0L245 160 150 280 60 340 0 345 M75 0L90 80 M0 610L70 620 160 660 200 680 300 490 350 340 420 200 M200 690L170 850 130 950V1100L0 1120 M610 0L600 60 500 140 M520 20L550 30 580 75 M785 0L810 130 770 150V170 M130 1110L140 1180 M50 340H85V365H55Z M190 665H220V690H190Z',
    states: 'M490 20L695 260 M40 310L80 340 90 385 150 450 175 545 215 590 225 675 280 700 M15 1045L35 1055 45 1100 65 1080 70 990 180 1012',
  },
];

/* Deterministic patches that give the land its mottled vegetation. */
const scatter = (count: number, seed: number, size: number, x0: number, y0: number, x1: number, y1: number) => {
  let s = seed;
  const rnd = () => {
    s = (s * 16807) % 2147483647;
    return s / 2147483647;
  };
  let d = '';
  for (let i = 0; i < count; i += 1) {
    const cx = x0 + rnd() * (x1 - x0);
    const cy = y0 + rnd() * (y1 - y0);
    const r = size * (0.4 + rnd());
    const n = 6;
    const tilt = rnd() * 3;
    for (let k = 0; k < n; k += 1) {
      const a = (k / n) * Math.PI * 2;
      const q = r * (0.4 + rnd() * 0.8);
      const px = Math.cos(a) * q;
      const py = Math.sin(a) * q * 0.5;
      const X = cx + px * Math.cos(tilt) + py * Math.sin(tilt);
      const Y = cy - px * Math.sin(tilt) + py * Math.cos(tilt);
      d += `${k ? 'L' : 'M'}${X.toFixed(1)} ${Y.toFixed(1)}`;
    }
    d += 'Z';
  }
  return d;
};

const COLORS = {
  forest: '#a7e6cd',
  meadow: '#bbecd8',
  dense: '#92e1be',
  sand: '#f5f0e4',
  water: '#71d4e9',
};

type Fill = 'forest' | 'meadow' | 'dense' | 'sand' | 'water';

function FillLayer({ layer }: { layer: Fill }) {
  return (
    <>
      {sheets.map((s) => (
        <path key={s.transform} transform={s.transform} d={s[layer] || ''} fill={COLORS[layer]} />
      ))}
    </>
  );
}

function LineLayer({ layer, ...rest }: { layer: 'rivers' | 'roads' | 'states' | 'nation' } & React.SVGProps<SVGGElement>) {
  return (
    <g fill="none" {...rest}>
      {sheets.map((s) => (
        <path key={s.transform} transform={s.transform} d={s[layer] || ''} vectorEffect="non-scaling-stroke" />
      ))}
    </g>
  );
}

function MapTerrain() {
  return (
    <Terrain viewBox={`${MAP.x} ${MAP.y} ${MAP.w} ${MAP.h}`} preserveAspectRatio="xMidYMid slice" aria-hidden="true">
      <FillLayer layer="forest" />
      <FillLayer layer="meadow" />
      <path d={scatter(110, 77, 20, 480, 1350, 1134, 2220)} fill={COLORS.meadow} />
      <path d={scatter(70, 31, 18, 36, 1780, 600, 2200)} fill={COLORS.meadow} />
      <path d={scatter(130, 913, 15, 300, 1480, 1050, 2220)} fill={COLORS.forest} />
      <path d={scatter(50, 53, 14, 700, 830, 1134, 1420)} fill={COLORS.meadow} />
      <path d={scatter(45, 407, 7, 560, 1400, 1134, 2200)} fill={COLORS.dense} />
      <path d={scatter(30, 99, 7, 36, 1700, 600, 2200)} fill={COLORS.dense} />
      <FillLayer layer="dense" />
      <FillLayer layer="sand" />
      <path d={scatter(150, 271, 3, 400, 850, 1134, 2200)} fill="#e6f8f0" />
      <path d={scatter(60, 17, 3, 36, 1800, 500, 2200)} fill="#e6f8f0" />
      <FillLayer layer="water" />
      <LineLayer layer="rivers" stroke={COLORS.water} strokeWidth="3" />
      <LineLayer layer="roads" stroke="#99bfdc" strokeOpacity="0.5" strokeWidth="4" strokeLinejoin="round" />
      <LineLayer layer="states" stroke="#5f6b6b" strokeWidth="2" strokeDasharray="6 5" />
      <LineLayer layer="nation" stroke="#2b2f33" strokeWidth="3" strokeLinejoin="round" />
    </Terrain>
  );
}

const regions: [string, number, number][] = [
  ['WISCONSIN', 86, 924],
  ['MICHIGAN', 414, 1010],
  ['NEW YORK', 1009, 1095],
  ['PENNSYLVANIA', 892, 1283],
  ['ILLINOIS', 87, 1341],
  ['INDIANA', 316, 1341],
  ['OHIO', 545, 1333],
  ['NJ', 1106, 1381],
  ['MARYLAND', 940, 1403],
  ['DE', 1052, 1448],
  ['WEST\nVIRGINIA', 669, 1491],
  ['VIRGINIA', 818, 1586],
  ['KENTUCKY', 394, 1586],
  ['TENNESSEE', 278, 1732],
  ['NORTH\nCAROLINA', 804, 1739],
  ['SOUTH\nCAROLINA', 702, 1880],
  ['MISSISSIPPI', 73, 1913],
  ['ALABAMA', 279, 1963],
  ['GEORGIA', 512, 1987],
];

const cities: { name: string; x: number; y: number; dx: number; dy: number; small?: boolean; capital?: boolean }[] = [
  { name: 'Ottawa', x: 946, y: 857, dx: 1027, dy: 855, capital: true },
  { name: 'Toronto', x: 688, y: 1024, dx: 776, dy: 1023 },
  { name: 'Chicago', x: 302, y: 1190, dx: 212, dy: 1188 },
  { name: 'Cincinnati', x: 321, y: 1440, dx: 426, dy: 1439 },
  { name: 'St. Louis', x: 132, y: 1480, dx: 38, dy: 1480 },
  { name: 'Charlotte', x: 577, y: 1771, dx: 677, dy: 1771 },
  { name: 'Memphis', x: 128, y: 1777, dx: 48, dy: 1776, small: true },
  { name: 'Atlanta', x: 513, y: 1894, dx: 434, dy: 1893 },
  { name: 'Jacksonville', x: 750, y: 2168, dx: 621, dy: 2168 },
  { name: 'New Orleans', x: 151, y: 2199, dx: 46, dy: 2198, small: true },
];

function Pin({ color, label, x, y }: { color: string; label: string; x: number; y: number }) {
  return (
    <PinButton type="button" aria-label={label} $x={x} $y={y}>
      <svg width="104" height="150" viewBox="0 0 104 150">
        <path d="M52 0C23 0 0 24 0 58c0 35 32 70 52 92 20-22 52-57 52-92C104 24 81 0 52 0Z" fill={color} />
        <ellipse cx="52" cy="57" rx="43" ry="48" fill="#fff" />
        <path d="M25 26C30 31 34 35 44 35 55 36 60 33 67 33 74 33 76 38 75 43 75 48 72 50 67 51 60 53 55 51 50 47 46 45 43 47 38 45 29 42 22 37 25 26Z" />
        <path d="M24 43C29 48 34 49 40 50L39 55C31 54 25 50 24 43Z" />
        <path d="M43 50C49 49 53 53 59 54V79C52 80 45 78 42 71 40 64 42 57 43 50ZM67 54L75 50C80 56 81 67 77 74 75 77 70 79 67 79Z" />
        <path d="M61 54V82M65 54V82" stroke="#222" strokeWidth="2" />
        <path d="M57 95L60 86Q63 82 66 86L69 95Z" fill="#fff" stroke="#000" strokeWidth="3" strokeLinejoin="round" />
      </svg>
    </PinButton>
  );
}

function Signal() {
  return (
    <svg width="51" height="34" viewBox="0 0 51 34" aria-label="Signal" role="img">
      <rect y="22" width="9" height="12" rx="3" />
      <rect x="14" y="16" width="9" height="18" rx="3" />
      <rect x="28" y="8" width="9" height="26" rx="3" />
      <rect x="42" width="9" height="34" rx="3" fill="#a2a2a2" />
    </svg>
  );
}

function SiteLogo() {
  return (
    <svg width="278" height="214" viewBox="126 72 834 642" role="img" aria-label="Elite Equine">
      <defs>
        <linearGradient id="gold" x1="126" x2="950" y1="0" y2="120" gradientUnits="userSpaceOnUse">
          <stop offset="0" stopColor="#b99b52" />
          <stop offset=".14" stopColor="#f3e6bd" />
          <stop offset=".3" stopColor="#a88d4d" />
          <stop offset=".5" stopColor="#c3a65c" />
          <stop offset=".72" stopColor="#e5cf8c" />
          <stop offset=".86" stopColor="#f0e4c0" />
          <stop offset="1" stopColor="#bfa25a" />
        </linearGradient>
        <linearGradient id="rule" x1="230" x2="946" y1="0" y2="0" gradientUnits="userSpaceOnUse">
          <stop offset="0" stopColor="#a4893f" />
          <stop offset=".18" stopColor="#eee3c4" />
          <stop offset=".36" stopColor="#4a3f20" />
          <stop offset=".6" stopColor="#5a4b25" />
          <stop offset=".72" stopColor="#c8ab5e" />
          <stop offset="1" stopColor="#c8ab5e" />
        </linearGradient>
      </defs>
      <g fill="#c4a964">
        <path d="M408 90Q500 70 545 110 575 140 588 180 560 140 535 122 490 88 408 90Z" />
        <path d="M555 158Q566 175 570 205L562 228 545 222Q538 190 555 158Z" />
        <path d="M622 160Q638 185 632 208L620 222Q606 195 622 160Z" />
        <path d="M594 198L606 225 600 235 588 226Z" />
        <path d="M620 226L645 255 648 272 638 285 636 330 628 362 622 330 630 290Z" />
        <path d="M445 272Q470 240 510 255L530 242Q520 270 522 320L535 345Q555 360 560 385 530 350 512 325 505 300 508 275 490 255 445 272Z" />
        <path d="M432 366Q460 340 495 345L500 332 522 345 532 380 530 410 538 440 522 420 515 375 498 368 494 355Q460 350 432 366Z" />
        <path d="M483 375L508 400 524 470 515 476 505 440 505 405Z" fill="#dcd0ae" />
        <path d="M408 408Q430 440 458 448 478 440 498 410 480 455 456 460 425 445 408 408Z" fill="#e3d5a8" />
        <path d="M572 398Q572 425 590 418 610 420 612 440 635 445 638 398 650 450 610 465 570 455 572 398Z" fill="#ece3c8" />
        <path d="M492 486Q485 530 515 534 550 530 553 508L538 488 550 468 556 510Q530 525 508 515 492 505 492 486Z" fill="#e1d8bb" />
        <path d="M585 488Q575 520 595 530 615 530 622 510L608 492 636 500 640 465Q655 500 630 525 600 550 575 530 562 505 585 488Z" />
      </g>
      <rect x="230" y="515" width="240" height="18" fill="url(#rule)" />
      <rect x="640" y="515" width="306" height="18" fill="url(#rule)" />
      <g fill="url(#gold)" fontFamily="'Liberation Serif', serif" fontWeight="400" stroke="url(#gold)" strokeWidth="3">
        <text x="128" y="637" fontSize="182">E</text>
        <text x="236" y="637" fontSize="136">LIT</text>
        <text x="452" y="637" fontSize="180" fontStyle="italic">e</text>
        <text x="530" y="637" fontSize="136">QUINE</text>
      </g>
    </svg>
  );
}

const google: [string, string][] = [
  ['G', '#4285f4'], ['o', '#ea4335'], ['o', '#fbbc04'], ['g', '#4285f4'], ['l', '#34a853'], ['e', '#ea4335'],
];

const legend: [string, string][] = [
  ['Location', '#005ce6'],
  ['Trial / Exchange Location', '#ff0000'],
  ['Transportation', '#000000'],
];

export default function App() {
  return (
    <Screen>
      <GlobalStyle />
      <StatusBar>
        <StatusRow>
          <Clock>3:26</Clock>
          <Indicators>
            <Signal />
            <Network>
              5G
              <NetworkMode>
                <span>U</span>
                <span>W</span>
              </NetworkMode>
            </Network>
            <Battery>26</Battery>
            <BatteryTip />
          </Indicators>
        </StatusRow>
        <Address>dev.eliteequinemarketplace.com</Address>
      </StatusBar>

      <Header>
        <a href="#home" aria-label="Elite Equine home">
          <SiteLogo />
        </a>
        <MenuButton type="button" aria-label="Menu">
          <svg width="64" height="66" viewBox="0 0 64 66" fill="none" stroke="#ececec" strokeWidth="4">
            <rect x="3" y="3" width="25" height="26" rx="6" />
            <rect x="36" y="3" width="25" height="26" rx="6" />
            <rect x="3" y="37" width="25" height="26" rx="6" />
            <circle cx="49" cy="50" r="12" />
          </svg>
        </MenuButton>
      </Header>

      <Page>
        <Actions>
          <GoldButton type="button" aria-label="Search" />
          <GoldButton type="button">Reset</GoldButton>
        </Actions>

        <MapSection>
          <Legend>
            <LegendList>
              {legend.map(([label, color]) => (
                <LegendItem key={label}>
                  <LegendDot $color={color} />
                  {label}
                </LegendItem>
              ))}
            </LegendList>
          </Legend>

          <MapCanvas>
            <MapTerrain />
            {regions.map(([name, x, y]) => (
              <Region key={name} $x={x} $y={y}>{name}</Region>
            ))}
            {cities.map((c) => (
              <React.Fragment key={c.name}>
                <City $x={c.x} $y={c.y} $small={c.small}>{c.name}</City>
                <CityDot $x={c.dx} $y={c.dy} $capital={c.capital} />
              </React.Fragment>
            ))}
            <Pin color="#ff0000" label="Trial / exchange location" x={340} y={1517} />
            <Pin color="#005ce6" label="Location" x={493} y={1730} />
            <Cluster type="button" $x={963} $y={1641}>3</Cluster>

            <MapTypes>
              <MapType type="button" $active>Map</MapType>
              <MapType type="button">Satellite</MapType>
            </MapTypes>

            <Controls>
              <Control type="button" aria-label="Map camera controls" $round>
                <svg width="70" height="70" viewBox="0 0 70 70" fill="none" stroke="#666" strokeWidth="7">
                  <path d="M25 14L35 4.500 45 14M25 56L35 65.500 45 56M14 25L4.500 35 14 45M56 25L65.500 35 56 45" />
                </svg>
              </Control>
              <Control type="button" aria-label="Street View Pegman">
                <svg width="52" height="92" viewBox="0 0 52 92" stroke="#757575" strokeWidth="2">
                  <path d="M14 31H38Q42 31 43 36L50 61Q51 66 46 66L43 64 39 52V90H28V68L26 64 24 68V90H13V52L9 64Q6 67 2 64L1 61 9 36Q10 31 14 31Z" fill="#fdbf2d" />
                  <path d="M16 32H36L26 48Z" fill="#e2812b" stroke="none" />
                  <path d="M15 31H37L33 34H19Z" fill="#c9532c" stroke="none" />
                  <circle cx="26" cy="17" r="15.500" fill="#fdbf2d" />
                </svg>
              </Control>
              <Zoom>
                <ZoomButton type="button" aria-label="Zoom in">
                  <svg width="50" height="50" viewBox="0 0 50 50" stroke="#666" strokeWidth="7">
                    <path d="M0 25H50M25 0V50" />
                  </svg>
                </ZoomButton>
                <ZoomRule />
                <ZoomButton type="button" aria-label="Zoom out">
                  <svg width="50" height="50" viewBox="0 0 50 50" stroke="#666" strokeWidth="7">
                    <path d="M0 25H50" />
                  </svg>
                </ZoomButton>
              </Zoom>
            </Controls>

            <GoogleLogo href="#google" aria-label="Google">
              {google.map(([letter, color], i) => (
                <Letter key={i} $color={color}>{letter}</Letter>
              ))}
            </GoogleLogo>
            <Attribution>
              <button type="button">Keyboard shortcuts</button>
              <span>Map data ©2025 Google, INEGI</span>
              <a href="#terms">Terms</a>
            </Attribution>
          </MapCanvas>
        </MapSection>

        <Card>
          <CardArt viewBox="0 0 1092 305" fill="#231f20" role="img" aria-label="Stable logo">
            <g transform="translate(211 -17) scale(.44643 .33333)">
              <path d="M613 271L755 232Q790 225 855 234 930 248 1000 300 1040 310 1048 342 1095 365 1108 395 1112 415 1118 435 1160 470 1167 500 1166 515 1170 530 1190 540 1200 560L1228 618 1229 653 1205 620Q1180 605 1177 578 1172 566 1160 564 1140 550 1141 510 1135 500 1112 487 1105 470 1104 445 1065 420 1063 410L1053 388Q1030 398 1018 380L1005 346Q990 360 980 350 970 325 962 326 950 332 946 325 938 298 920 301L896 303Q860 265 810 267Z" />
              <path d="M1128 567L1131 580Q1132 610 1145 640L1158 700V765L1120 840 1093 775 1097 850Q1070 800 1077 745 1090 680 1092 650 1102 600 1128 567Z" />
              <path d="M1158 795Q1166 820 1155 850H1138Z" />
              <path d="M1345 582Q1395 620 1386 710 1380 780 1368 800L1336 844Q1310 740 1317 720 1330 640 1337 625 1340 590 1345 582Z" />
              <path d="M1251 743L1278 800Q1280 830 1289 850V880L1274 902Q1250 895 1244 868 1258 840 1254 825L1240 795Q1250 785 1251 743Z" />
              <path d="M1358 844L1368 890 1402 966H1344L1343 910Z" />
              <path d="M1058 921L1036 966H1024Z" />
              <path d="M460 566Q330 545 220 720 140 840 102 966H140Q200 780 300 670 380 580 460 566Z" />
              <path
                fillRule="evenodd"
                d="M179 966Q240 780 340 660 420 560 520 564 625 575 627 690 620 800 540 890 500 945 440 966ZM503 655Q440 720 395 800 375 850 366 905L380 900Q450 860 490 770 515 700 503 655ZM530 636Q580 620 584 680 585 740 560 785 490 905 356 931L360 922Q470 890 520 790 560 700 540 650Z"
              />
              <path d="M635 966L705 820Q715 795 728 799 742 805 738 825L674 966Z" />
              <path d="M711 966L785 815Q795 793 812 799 826 808 821 828L758 966Z" />
            </g>
          </CardArt>
        </Card>
      </Page>
      <HomeIndicator />
    </Screen>
  );
}
